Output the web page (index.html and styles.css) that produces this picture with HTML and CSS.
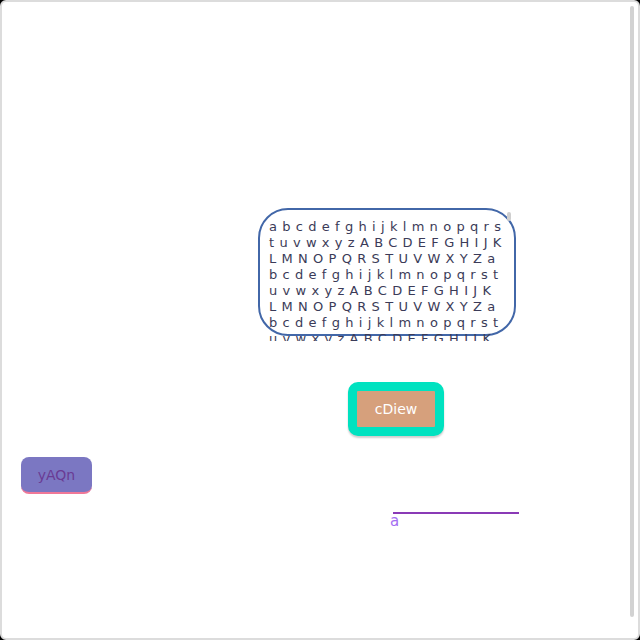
FILE: index.html
```html
<!DOCTYPE html>
<html lang="en">
<head>
    <meta charset="UTF-8">
    <title>Canvas</title>
    <link rel="stylesheet" href="styles.css">
</head>
<body>
    <div class="frame">
        <div class="page-scroll"></div>

        <div class="text-wrap">
            <div class="text-box">
                <div class="line">abcdefghijklmnopqrs</div>
                <div class="line">tuvwxyzABCDEFGHIJK</div>
                <div class="line">LMNOPQRSTUVWXYZa</div>
                <div class="line">bcdefghijklmnopqrst</div>
                <div class="line">uvwxyzABCDEFGHIJK</div>
                <div class="line">LMNOPQRSTUVWXYZa</div>
                <div class="line">bcdefghijklmnopqrst</div>
                <div class="line">uvwxyzABCDEFGHIJK</div>
            </div>
            <div class="box-thumb"></div>
        </div>

        <button class="teal-btn">cDiew</button>

        <div class="chip">yAQn</div>

        <div class="field">
            <div class="field-label">a</div>
        </div>
    </div>
</body>
</html>
```

FILE: styles.css
```css
* {
    box-sizing: border-box;
}

body {
    margin: 0;
    background: #000;
}

.frame {
    position: relative;
    width: 640px;
    height: 640px;
    background: #fff;
    border: 2px solid #dcdcdc;
    border-radius: 6px;
    overflow: hidden;
    font-family: 'DejaVu Sans', sans-serif;
}

.page-scroll {
    position: absolute;
    top: 4px;
    right: 4px;
    width: 4px;
    height: 611px;
    background: #d2d2d2;
    border-radius: 2px;
}

.text-wrap {
    position: relative;
    margin: 206px 0 0 256px;
    width: 258px;
    height: 133px;
    overflow: hidden;
}

.text-box {
    height: 128px;
    border: 2px solid #4267a8;
    border-radius: 30px;
    padding: 9px 0 0 9px;
    color: #3b3b58;
    font-size: 13px;
    line-height: 16px;
    letter-spacing: 5.3px;
}

.line {
    white-space: nowrap;
}

.box-thumb {
    position: absolute;
    top: 4px;
    left: 249px;
    width: 4px;
    height: 9px;
    background: #cfcfcf;
    border-radius: 2px;
}

.teal-btn {
    display: flex;
    justify-content: center;
    align-items: center;
    margin: 41px 0 0 346px;
    width: 96px;
    height: 54px;
    padding: 0;
    background: #d6a07c;
    border: 9px solid #00e2c0;
    border-radius: 10px;
    box-shadow: 0 2px 2px rgba(0,0,0,0.2);
    color: #fff;
    font-family: 'DejaVu Sans', sans-serif;
    font-size: 14px;
}

.chip {
    display: flex;
    justify-content: center;
    align-items: center;
    margin: 21px 0 0 19px;
    width: 71px;
    height: 37px;
    background: #7b77c2;
    border-bottom: 2px solid #f07898;
    border-radius: 8px;
    color: #6a3b94;
    font-size: 14px;
}

.field {
    margin: 18px 0 0 391px;
    width: 126px;
    border-top: 2px solid #8a3ab6;
}

.field-label {
    margin-left: -3px;
    color: #a46ff2;
    font-size: 15px;
    line-height: 14px;
}
```
